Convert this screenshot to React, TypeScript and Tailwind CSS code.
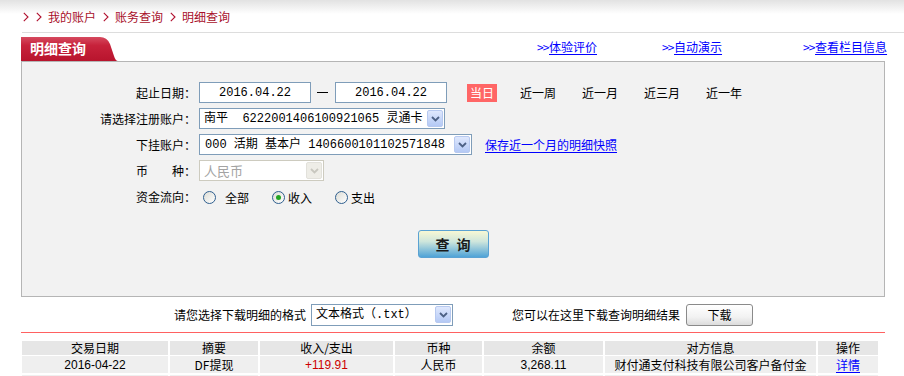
import React from "react";

function Chev({ className = "" }: { className?: string }) {
  return (
    <svg className={className} width="6" height="10" viewBox="0 0 6 10">
      <path d="M0.8 0.8 L5 5 L0.8 9.2" fill="none" stroke="#b0102e" strokeWidth="1.1" />
    </svg>
  );
}

function DropBtn({ disabled }: { disabled?: boolean }) {
  if (disabled) {
    return (
      <div className="w-[16px] h-[17px] mr-[1px] rounded-[2px] bg-[#eeede7] border border-[#e2e1db] flex items-center justify-center">
        <svg width="9" height="6" viewBox="0 0 9 6">
          <path d="M1 1 L4.5 4.5 L8 1" fill="none" stroke="#c8c7bf" strokeWidth="1.8" />
        </svg>
      </div>
    );
  }
  return (
    <div className="w-[16px] h-[17px] mr-[1px] rounded-[2px] bg-[linear-gradient(to_bottom,#dfe8fd,#b4c9f5)] border border-[#b7c9f0] flex items-center justify-center">
      <svg width="9" height="6" viewBox="0 0 9 6">
        <path d="M1 1 L4.5 4.5 L8 1" fill="none" stroke="#4d6185" strokeWidth="1.8" />
      </svg>
    </div>
  );
}

function Radio({ checked }: { checked?: boolean }) {
  return (
    <div className="w-[13px] h-[13px] rounded-full border border-[#2f5f8f] bg-[linear-gradient(135deg,#dcdcd5,#ffffff)] flex items-center justify-center">
      {checked && <div className="w-[5px] h-[5px] rounded-full bg-[#22a522]" />}
    </div>
  );
}

export default function App() {
  const widths = [146, 88, 133, 87, 119, 211, 60];
  const heads = ["交易日期", "摘要", "收入/支出", "币种", "余额", "对方信息", "操作"];
  return (
    <div className="w-[904px] h-[376px] overflow-hidden bg-white text-[12px] leading-none text-black font-['Noto_Sans_CJK_SC',sans-serif]">
      {/* breadcrumb */}
      <div className="h-[32px] bg-[linear-gradient(to_bottom,#e2e2e2,#ffffff_14px)] flex items-center pl-[23px] pt-[1px] text-[#a8102a]">
        <Chev />
        <Chev className="ml-[7px]" />
        <span className="ml-[6px]">我的账户</span>
        <Chev className="ml-[7px]" />
        <span className="ml-[6px]">账务查询</span>
        <Chev className="ml-[7px]" />
        <span className="ml-[6px]">明细查询</span>
      </div>
      <div className="ml-[22px] h-px bg-[#dddddd]" />

      {/* tab row */}
      <div className="mt-[4px] h-[24px] flex items-start pl-[21px]">
        <div className="relative w-[97px] h-[24px]">
          <svg className="absolute inset-0" width="97" height="24" viewBox="0 0 97 24">
            <defs>
              <linearGradient id="tg" x1="0" y1="0" x2="0" y2="1">
                <stop offset="0" stopColor="#d64a5f" />
                <stop offset="0.35" stopColor="#c7223b" />
                <stop offset="1" stopColor="#b8142d" />
              </linearGradient>
            </defs>
            <path d="M0 0 H79 Q86 0 89 7 L93 19 Q94.5 24 97 24 H0 Z" fill="url(#tg)" />
          </svg>
          <span className="relative block pl-[9px] leading-[22px] text-[14px] font-bold text-white">明细查询</span>
        </div>
        <div className="ml-[419px] h-[20px] flex items-center text-[#0000ff]">
          <span className="w-[12px] tracking-[-1px]">&gt;&gt;</span>
          <span className="underline underline-offset-2">体验评价</span>
        </div>
        <div className="ml-[65px] h-[20px] flex items-center text-[#0000ff]">
          <span className="w-[12px] tracking-[-1px]">&gt;&gt;</span>
          <span className="underline underline-offset-2">自动演示</span>
        </div>
        <div className="ml-[81px] h-[20px] flex items-center text-[#0000ff]">
          <span className="w-[12px] tracking-[-1px]">&gt;&gt;</span>
          <span className="underline underline-offset-2">查看栏目信息</span>
        </div>
      </div>

      {/* panel */}
      <div className="ml-[21px] w-[864px] h-[236px] border border-[#b5b5b5] bg-[#f2f2f2] pt-[20px]">
        {/* row 1 */}
        <div className="flex items-center h-[21px]">
          <div className="w-[174px] text-right">起止日期：</div>
          <div className="ml-[3px] w-[112px] h-[21px] border border-[#7f9db9] bg-white flex items-center justify-center font-['Liberation_Mono','Noto_Sans_CJK_SC',monospace]">
            2016.04.22
          </div>
          <div className="ml-[6px] w-[11px] h-px bg-black" />
          <div className="ml-[7px] w-[112px] h-[21px] border border-[#7f9db9] bg-white flex items-center justify-center font-['Liberation_Mono','Noto_Sans_CJK_SC',monospace]">
            2016.04.22
          </div>
          <div className="ml-[20px] h-[18px] px-[3px] bg-[#ff6666] text-white leading-[18px]">当日</div>
          <span className="ml-[23px]">近一周</span>
          <span className="ml-[26px]">近一月</span>
          <span className="ml-[26px]">近三月</span>
          <span className="ml-[26px]">近一年</span>
        </div>
        {/* row 2 */}
        <div className="mt-[5px] flex items-center h-[21px]">
          <div className="w-[174px] text-right">请选择注册账户：</div>
          <div className="ml-[3px] w-[246px] h-[21px] border border-[#7f9db9] bg-white flex items-center justify-between pl-[4px]">
            <span className="whitespace-pre font-['Liberation_Mono','Noto_Sans_CJK_SC',monospace]">南平  6222001406100921065 灵通卡</span>
            <DropBtn />
          </div>
        </div>
        {/* row 3 */}
        <div className="mt-[5px] flex items-center h-[21px]">
          <div className="w-[174px] text-right">下挂账户：</div>
          <div className="ml-[3px] w-[273px] h-[21px] border border-[#7f9db9] bg-white flex items-center justify-between pl-[5px]">
            <span className="whitespace-pre font-['Liberation_Mono','Noto_Sans_CJK_SC',monospace]">000 活期 基本户 1406600101102571848</span>
            <DropBtn />
          </div>
          <span className="ml-[13px] text-[#0000ff] underline underline-offset-2">保存近一个月的明细快照</span>
        </div>
        {/* row 4 */}
        <div className="mt-[5px] flex items-center h-[21px]">
          <div className="w-[174px] text-right whitespace-pre">币　　种：</div>
          <div className="ml-[3px] w-[125px] h-[21px] border border-[#cdcbbf] bg-white flex items-center justify-between pl-[4px]">
            <span className="text-[13px] text-[#a3a3a3]">人民币</span>
            <DropBtn disabled />
          </div>
        </div>
        {/* row 5 */}
        <div className="mt-[6px] flex items-center h-[21px]">
          <div className="w-[174px] text-right -mt-[2px]">资金流向：</div>
          <div className="ml-[7px]"><Radio /></div>
          <span className="ml-[9px]">全部</span>
          <div className="ml-[23px]"><Radio checked /></div>
          <span className="ml-[3px]">收入</span>
          <div className="ml-[23px]"><Radio /></div>
          <span className="ml-[3px]">支出</span>
        </div>
        {/* query button */}
        <div className="mt-[22px] flex justify-center">
          <div className="w-[71px] h-[28px] rounded-[3px] border border-[#5aa2d3] bg-[linear-gradient(to_bottom,#f8f8d4,#cfe6dc_40%,#4fa3d7)] flex items-center justify-center gap-[7px] text-[14px] font-bold text-[#1a1a1a]">
            <span>查</span>
            <span>询</span>
          </div>
        </div>
      </div>

      {/* download row */}
      <div className="mt-[6px] h-[23px] flex items-center pl-[174px]">
        <span>请您选择下载明细的格式</span>
        <div className="ml-[5px] w-[142px] h-[22px] border border-[#7f9db9] bg-white flex items-center justify-between pl-[4px]">
          <span className="whitespace-pre font-['Liberation_Mono','Noto_Sans_CJK_SC',monospace]">文本格式（.txt）</span>
          <DropBtn />
        </div>
        <span className="ml-[59px]">您可以在这里下载查询明细结果</span>
        <div className="ml-[6px] w-[67px] h-[22px] rounded-[3px] border border-[#8a8a8a] bg-[linear-gradient(to_bottom,#ffffff,#f2f2f2_60%,#dcdcdc)] flex items-center justify-center">
          下载
        </div>
      </div>

      {/* red line */}
      <div className="mt-[6px] ml-[21px] w-[864px] h-px bg-[#ff6161]" />

      {/* table */}
      <div className="mt-[8px] ml-[22px] flex flex-col gap-[1px]">
        <div className="flex gap-[2px] h-[14px]">
          {heads.map((h, i) => (
            <div key={i} style={{ width: widths[i] }} className="bg-[#e6e6e6] flex items-center justify-center leading-[14px]">
              {h}
            </div>
          ))}
        </div>
        <div className="flex gap-[2px] h-[17px]">
          <div style={{ width: widths[0] }} className="bg-[#efefef] flex items-center justify-center font-['Liberation_Sans',sans-serif]">2016-04-22</div>
          <div style={{ width: widths[1] }} className="bg-[#efefef] flex items-center justify-center">DF提现</div>
          <div style={{ width: widths[2] }} className="bg-[#efefef] flex items-center justify-center font-['Liberation_Sans',sans-serif] text-[#cc0000]">+119.91</div>
          <div style={{ width: widths[3] }} className="bg-[#efefef] flex items-center justify-center">人民币</div>
          <div style={{ width: widths[4] }} className="bg-[#efefef] flex items-center justify-center font-['Liberation_Sans',sans-serif]">3,268.11</div>
          <div style={{ width: widths[5] }} className="bg-[#efefef] flex items-center justify-center">财付通支付科技有限公司客户备付金</div>
          <div style={{ width: widths[6] }} className="bg-[#efefef] flex items-center justify-center text-[#0000ff] underline underline-offset-2">详情</div>
        </div>
        <div className="mt-[1px] flex gap-[2px] h-[17px]">
          {widths.map((w, i) => (
            <div key={i} style={{ width: w }} className="bg-[#efefef]" />
          ))}
        </div>
      </div>
    </div>
  );
}
